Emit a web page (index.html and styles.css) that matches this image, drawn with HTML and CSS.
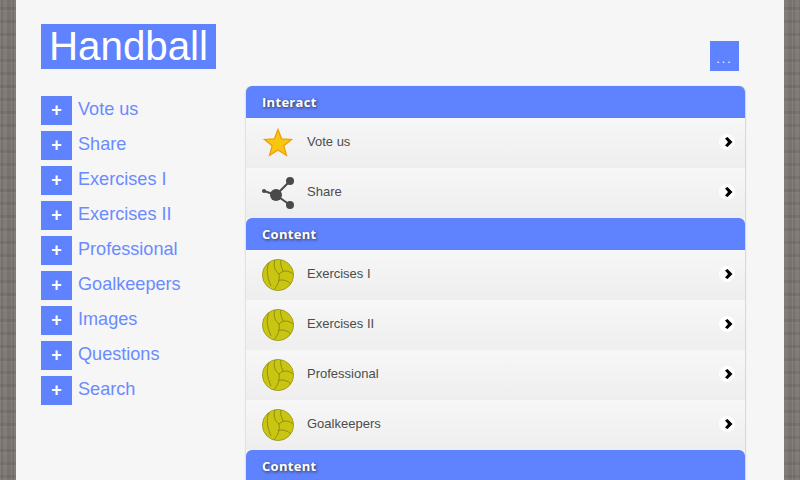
FILE: index.html
```html
<!DOCTYPE html>
<html lang="en">
<head>
    <meta charset="UTF-8">
    <meta name="viewport" content="width=device-width, initial-scale=1.0">
    <title>Handball</title>
    <link rel="stylesheet" href="styles.css">
</head>
<body>
    <svg class="defs" width="0" height="0">
        <symbol id="ball" viewBox="0 0 32 32">
            <circle cx="16" cy="16" r="15.600" fill="#c9c510" stroke="#96931c" stroke-width="0.800"/>
            <g fill="none" stroke="#8a8716" stroke-width="0.900">
                <path d="M17 15C13 12 11 7 13 .8"/>
                <path d="M17 15C21 11 26 11 31 15"/>
                <path d="M17 15C18 21 16 26 12 30.500"/>
                <path d="M7 3.500C4 10 5 18 9 27"/>
                <path d="M19 1C18 4 19 7 21 12"/>
                <path d="M16 21.500C21 20 26 22 29 25"/>
            </g>
        </symbol>
        <symbol id="chevron" viewBox="0 0 16 16">
            <path d="M6 4.500L8.500 3 13.500 8 8.500 13 6 11.500 9 8z" fill="#000"/>
        </symbol>
    </svg>
    <div class="page">
        <header class="top">
            <h1 class="title">Handball</h1>
            <a class="more" href="#">...</a>
        </header>
        <div class="main-content">
            <nav class="side">
                <a href="#"><span class="plus">+</span>Vote us</a>
                <a href="#"><span class="plus">+</span>Share</a>
                <a href="#"><span class="plus">+</span>Exercises I</a>
                <a href="#"><span class="plus">+</span>Exercises II</a>
                <a href="#"><span class="plus">+</span>Professional</a>
                <a href="#"><span class="plus">+</span>Goalkeepers</a>
                <a href="#"><span class="plus">+</span>Images</a>
                <a href="#"><span class="plus">+</span>Questions</a>
                <a href="#"><span class="plus">+</span>Search</a>
            </nav>
            <div class="list">
                <h2 class="list-head">Interact</h2>
                <a class="row" href="#">
                    <svg class="icon" viewBox="0 0 32 32"><path d="M16 2.500l3.600 9.300 10 .6-7.800 6.300 2.700 9.800L16 23l-8.500 5.500 2.700-9.800-7.800-6.300 10-.6z" fill="#f7c60e" stroke="#f09a0c" stroke-width="1.200"/></svg>
                    <span class="label">Vote us</span>
                    <span class="go"><svg width="16" height="16"><use href="#chevron"/></svg></span>
                </a>
                <a class="row" href="#">
                    <svg class="icon" viewBox="0 0 32 32"><path d="M2 14L14 18 28 4M14 18L28 28" fill="none" stroke="#4a4a4a" stroke-width="2"/><g fill="#4a4a4a"><circle cx="14" cy="18" r="6"/><circle cx="28" cy="4" r="4"/><circle cx="28" cy="28" r="4"/><circle cx="2" cy="14" r="2"/></g></svg>
                    <span class="label">Share</span>
                    <span class="go"><svg width="16" height="16"><use href="#chevron"/></svg></span>
                </a>
                <h2 class="list-head">Content</h2>
                <a class="row" href="#">
                    <svg class="icon"><use href="#ball"/></svg>
                    <span class="label">Exercises I</span>
                    <span class="go"><svg width="16" height="16"><use href="#chevron"/></svg></span>
                </a>
                <a class="row" href="#">
                    <svg class="icon"><use href="#ball"/></svg>
                    <span class="label">Exercises II</span>
                    <span class="go"><svg width="16" height="16"><use href="#chevron"/></svg></span>
                </a>
                <a class="row" href="#">
                    <svg class="icon"><use href="#ball"/></svg>
                    <span class="label">Professional</span>
                    <span class="go"><svg width="16" height="16"><use href="#chevron"/></svg></span>
                </a>
                <a class="row" href="#">
                    <svg class="icon"><use href="#ball"/></svg>
                    <span class="label">Goalkeepers</span>
                    <span class="go"><svg width="16" height="16"><use href="#chevron"/></svg></span>
                </a>
                <h2 class="list-head">Content</h2>
            </div>
        </div>
    </div>
</body>
</html>
```

FILE: styles.css
```css
html, body {
    height: 100%;
    overflow: hidden;
}
body {
    margin: 0;
    font-family: "Liberation Sans", Arial, sans-serif;
    background-color: #7a7571;
    background-image:
        repeating-linear-gradient(90deg, rgba(255,255,255,0.05) 0 1px, rgba(0,0,0,0.05) 1px 3px, rgba(255,255,255,0.03) 3px 7px, rgba(0,0,0,0.04) 7px 11px),
        repeating-linear-gradient(0deg, rgba(255,255,255,0.04) 0 2px, rgba(0,0,0,0.05) 2px 5px, rgba(255,255,255,0.02) 5px 13px);
}
.defs {
    display: block;
    height: 0;
}
.page {
    margin: 0 16px;
    height: 100%;
    padding: 24px 39px 0 25px;
    box-sizing: border-box;
    background-color: #f6f6f6;
}
.top {
    display: flex;
    justify-content: space-between;
    align-items: flex-start;
    height: 62px;
}
.title {
    margin: 0;
    width: 175px;
    height: 45px;
    background-color: #5f82ff;
    color: #ffffff;
    font-size: 40.300px;
    font-weight: normal;
    line-height: 46px;
    text-align: center;
}
.more {
    width: 29px;
    height: 30px;
    margin: 17px 6px 0 0;
    background-color: #5f82ff;
    color: #ffffff;
    font-size: 12px;
    letter-spacing: 2px;
    line-height: 37px;
    text-align: center;
    text-decoration: none;
}
.main-content {
    display: flex;
}
.side {
    display: flex;
    flex-direction: column;
    gap: 6px;
    width: 205px;
    padding-top: 10px;
}
.side a {
    display: flex;
    height: 29px;
    color: #6a8bff;
    font-size: 18.100px;
    line-height: 26px;
    text-decoration: none;
}
.plus {
    width: 31px;
    margin-right: 6px;
    background-color: #5f82ff;
    color: #ffffff;
    font-size: 18px;
    font-weight: bold;
    line-height: 29px;
    text-align: center;
}
.list {
    width: 499px;
    box-shadow: 1px 0 1px #d6d6d6, -1px 0 1px #e0e0e0;
    border-radius: 6px 6px 0 0;
}
.list-head {
    margin: 0;
    height: 32px;
    padding-left: 16px;
    border-radius: 6px 6px 0 0;
    background-color: #5f82ff;
    color: #ffffff;
    font-family: "Open Sans", sans-serif;
    font-size: 13px;
    font-weight: bold;
    line-height: 32px;
    letter-spacing: 0.3px;
    text-shadow: 1px 1px 3px #333333;
}
.row {
    display: flex;
    align-items: center;
    height: 50px;
    padding: 0 10px 0 16px;
    background: linear-gradient(to bottom, #f7f7f7, #eeeeee);
    color: #4c4c4c;
    text-decoration: none;
}
.icon {
    width: 32px;
    height: 32px;
    margin-right: 13px;
}
.label {
    flex: 1;
    padding-bottom: 4px;
    font-size: 13px;
}
.go {
    display: flex;
    width: 16px;
    height: 16px;
    margin-bottom: 2px;
    border-radius: 50%;
    background-color: #ffffff;
}
```
